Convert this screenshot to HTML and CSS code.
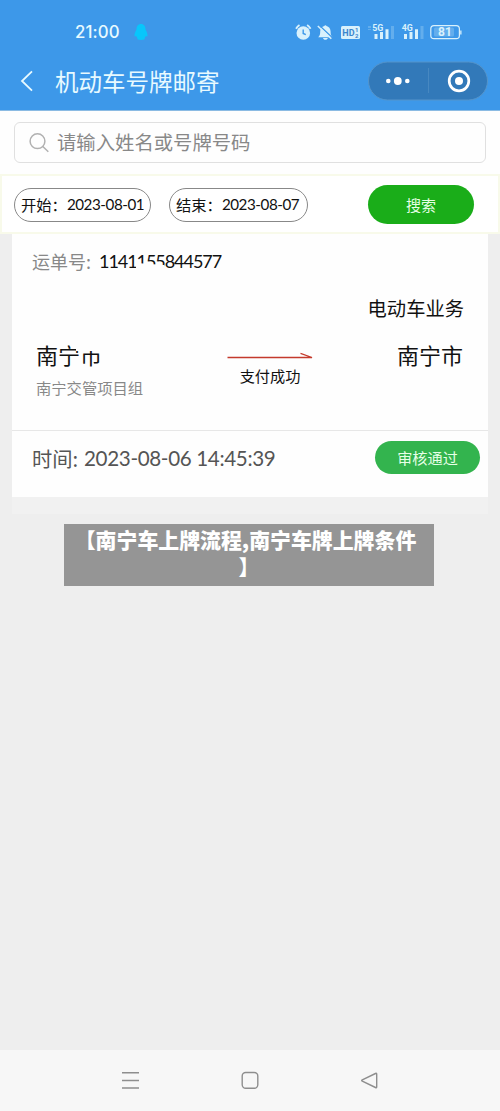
FILE: index.html
```html
<!DOCTYPE html>
<html lang="zh-CN">
<head>
<meta charset="utf-8">
<title>机动车号牌邮寄</title>
<link rel="stylesheet" href="styles.css">
</head>
<body>
<header class="header">
  <div class="status">
    <span class="clock">21:00</span>
    <svg class="penguin" width="14" height="18" viewBox="0 0 14 18"><path fill="#08c6fb" d="M7 1C4 1 2.500 3.300 2.500 6.500 1.200 9 0 11.500 .6 13.200c.4.500 1 .2 1.500-.4.300 1 .700 1.700 1.300 2.300C2.700 16.500 4 17 7 17s4.300-.5 3.600-1.900c.6-.6 1-1.300 1.300-2.300.5.600 1.100.900 1.500.400C14 11.500 12.800 9 11.500 6.500 11.500 3.300 10 1 7 1z"/></svg>
    <svg class="tray" width="170" height="20" viewBox="295 22 170 20">
      <g fill="#d9f1fc">
        <circle cx="303.300" cy="33" r="6.800"/>
        <path d="M296 28.800a12 12 0 0 1 3.500-3.700M310.600 28.800a12 12 0 0 0-3.500-3.700" fill="none" stroke="#d9f1fc" stroke-width="1.800"/>
        <path d="M303.200 29.500v4l2.600 1.200" fill="none" stroke="#3d98e9" stroke-width="1.400"/>
        <path d="M318.200 37.300c1.700-1.600 2-3 2-5.800 0-2.900 1.700-5.200 4.100-5.600a1.200 1.200 0 0 1 2.200 0c2.200.4 4.100 2.700 4.100 5.600 0 2.800.3 4.200 2 5.800zM323 38h4.800c-.3 2.400-4.500 2.400-4.800 0z"/>
        <path d="M319.200 25.200l13.500 12.800" stroke="#3d98e9" stroke-width="1.300"/>
        <path d="M317.800 26l13.500 12.800" stroke="#d9f1fc" stroke-width="1.500"/>
        <rect x="341" y="26" width="19" height="13" rx="1.500"/>
        <path d="M374.500 34h3v5h-3zM380 32h3v7h-3zM385.500 29.300h3v9.700h-3zM404 34h3v5h-3zM409.500 32h3v7h-3zM415 29.300h3v9.700h-3z"/>
        <path d="M391 26h3v13h-3zM420.500 26h3v13h-3zM368 26h3v2h-3zM368 29h3v1h-3z" opacity=".25"/>
        <text class="t9" x="342.300" y="36" fill="#3d86cc">HD</text>
        <text class="t6" x="355" y="32" fill="#3d86cc">1</text>
        <text class="t6" x="355" y="38" fill="#3d86cc">2</text>
        <text class="t8" x="372.300" y="31">5G</text>
        <text class="t8" x="401.800" y="31">4G</text>
        <rect x="434" y="27.500" width="20" height="9" rx="1.500" opacity=".25"/>
        <rect x="430.800" y="25.700" width="28.600" height="13" rx="3.200" fill="none" stroke="#d9f1fc" stroke-width="1.200"/>
        <path d="M460.200 30.500h1.300v4h-1.300z"/>
        <text class="t11" x="438" y="36.400">81</text>
      </g>
    </svg>
  </div>
  <div class="titlebar">
    <svg class="back" width="14" height="22" viewBox="0 0 14 22"><path d="M12 1.300L2 11l10 9.700" fill="none" stroke="#e8faff" stroke-width="1.800"/></svg>
    <h1 class="title">机动车号牌邮寄</h1>
    <svg class="capsule" width="120" height="40" viewBox="0 0 120 40">
      <rect x=".5" y="1" width="119" height="38" rx="19" fill="#3279b9" stroke="#5594ca"/>
      <path d="M60.500 7v25" stroke="#4788c1"/>
      <g fill="#fff"><circle cx="20.300" cy="20" r="2.300"/><circle cx="29.800" cy="20" r="3.900"/><circle cx="39.300" cy="20" r="2.300"/><circle cx="91" cy="20" r="4"/></g>
      <circle cx="91" cy="20" r="9.800" fill="none" stroke="#fff" stroke-width="2.700"/>
    </svg>
  </div>
</header>
<section class="search">
  <div class="searchbox">
    <svg width="20" height="20" viewBox="0 0 20 20"><g fill="none" stroke="#b1b1b1" stroke-width="1.500"><circle cx="8.500" cy="8.200" r="7.400"/><path d="M13.800 13.500l5.500 5.200"/></g></svg>
    <span class="placeholder">请输入姓名或号牌号码</span>
  </div>
</section>
<section class="filter">
  <div class="date"><span>开始：</span><span class="num">2023-08-01</span></div>
  <div class="date end"><span>结束：</span><span class="num">2023-08-07</span></div>
  <button class="go">搜索</button>
</section>
<main class="card">
  <div class="waybill"><span class="label">运单号:</span><span class="code">1141155844577<i class="smudge"></i></span></div>
  <div class="business">电动车业务</div>
  <div class="route">
    <div class="from"><div class="city">南宁市<i class="smudge"></i></div><div class="team">南宁交管项目组</div></div>
    <div class="pay">
      <svg width="88" height="10" viewBox="0 0 88 10"><path d="M.5 6.500H85L73.500 2.300" fill="none" stroke="#c43a2c" stroke-width="1.300"/></svg>
      <div>支付成功</div>
    </div>
    <div class="city to">南宁市</div>
  </div>
  <div class="foot"><span class="when">时间:</span><span class="stamp">2023-08-06 14:45:39</span><span class="pass">审核通过</span></div>
</main>
<div class="band"></div>
<div class="caption"><div class="first">【南宁车上牌流程,南宁车牌上牌条件</div><div>】</div></div>
<nav class="nav">
  <svg width="500" height="61" viewBox="0 0 500 61"><g fill="none" stroke="#8e8e8e" stroke-width="1.400"><path d="M122 22.700h17M122 30.500h17M122 38h17"/><rect x="242.200" y="22.500" width="15.600" height="15.800" rx="3.500"/><path d="M375.500 23.500q1.200-.6 1.200.8v12.400q0 1.400-1.200.8L362.300 31.200q-1.200-.7 0-1.400z"/></g></svg>
</nav>
</body>
</html>
```
FILE: styles.css
```css
* { box-sizing: border-box; }
body { margin: 0; width: 500px; height: 1111px; background: #eee; font-family: "Noto Sans CJK SC", sans-serif; color: #111; display: flex; flex-direction: column; overflow: hidden; }
svg { display: block; flex: none; }
.header { height: 111px; background: #3d98e9; flex: none; border-bottom: 1px solid #8bbbe3; }
.status { display: flex; align-items: center; padding: 22px 0 0 75px; height: 42px; }
.clock { font: 500 16.800px/20px Inter, sans-serif; width: 59px; letter-spacing: .1px; color: #e8faff; }
.tray { margin-left: 147px; font-family: Roboto, sans-serif; font-weight: 700; }
.t9 { font-size: 9px; }
.t6 { font-size: 6px; }
.t8 { font-size: 8.800px; }
.t11 { font-size: 12px; }
.titlebar { display: flex; align-items: center; height: 40px; margin-top: 19px; padding-left: 20px; }
.title { margin: 0 0 0 21px; width: 313px; font-size: 23.500px; font-weight: 400; line-height: 40px; color: #e8faff; }
.search { height: 63px; flex: none; background: #fefefe; padding: 11px 14px 0; }
.searchbox { height: 41px; border: 1px solid #e0e0e0; border-radius: 6px; display: flex; align-items: center; padding-left: 14px; gap: 8px; }
.placeholder { font-size: 19.350px; line-height: 39px; color: #888; }
.filter { height: 60px; flex: none; background: #fff; border: 2px solid #f8faea; display: flex; align-items: center; padding: 1px 0 0 12px; }
.date { width: 137px; height: 34px; border: 1.500px solid #888; border-radius: 17px; display: flex; align-items: center; padding: 0 0 2px 6px; font-size: 15.300px; white-space: nowrap; }
.date.end { width: 139px; margin-left: 18px; }
.num, .code, .stamp { font-family: Lato, sans-serif; }
.num { font-size: 15.200px; letter-spacing: -.45px; }
.go { margin-left: 60px; width: 106px; height: 39px; border: 0; border-radius: 20px; padding: 0; background: #1aad19; color: #e6ffe6; font: 15px "Noto Sans CJK SC", sans-serif; }
.card { width: 476px; height: 263px; flex: none; margin-left: 12px; background: #fefefe; }
.waybill { height: 54px; padding: 12px 0 0 20px; display: flex; line-height: 30px; }
.label { width: 67px; font-size: 18px; color: #888; }
.code { position: relative; font-size: 18px; letter-spacing: -1.050px; }
.smudge { position: absolute; background: #fefefe; }
.code .smudge { left: 37px; top: 18px; width: 28px; height: 8px; transform: rotate(4deg); }
.business { height: 40px; padding-right: 24px; line-height: 40px; font-size: 19.300px; text-align: right; }
.route { height: 102px; display: flex; padding: 9px 25px 0 24px; }
.from { width: 191px; }
.city { position: relative; font-size: 22px; line-height: 34px; }
.city .smudge { left: 40px; top: 0; width: 30px; height: 14px; }
.team { padding-top: 1px; font-size: 15.300px; line-height: 30px; color: #888; }
.pay { width: 86px; padding-top: 14px; font-size: 15.200px; line-height: 28px; text-align: center; }
.to { margin-left: auto; }
.foot { height: 67px; border-top: 1px solid #e7e7e7; padding: 10px 8px 0 20px; display: flex; line-height: 34px; color: #555; }
.when { width: 52px; font-size: 20.300px; }
.stamp { font-size: 20.600px; letter-spacing: -.35px; white-space: nowrap; }
.pass { margin-left: auto; width: 105px; height: 33px; border-radius: 17px; background: #33b44e; color: #e6ffe6; font-size: 15.200px; line-height: 33px; text-align: center; }
.band { height: 17px; flex: none; width: 476px; margin-left: 12px; background: #f1f1f1; }
.caption { margin: 10px 0 0 64px; width: 370px; height: 62px; flex: none; background: #959595; color: #fff; font-size: 20.900px; font-weight: 900; line-height: 27px; padding-top: 2px; text-align: center; white-space: nowrap; }
.first { padding-right: 7px; }
.nav { margin-top: auto; height: 61px; flex: none; background: #f7f7f7; }
```
